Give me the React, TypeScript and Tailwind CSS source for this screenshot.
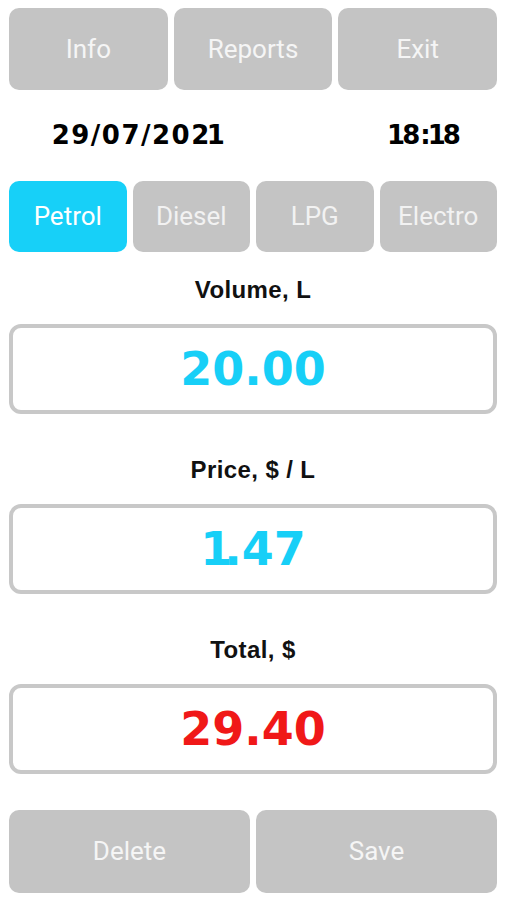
const topButtons = ["Info", "Reports", "Exit"];
const fuels = ["Petrol", "Diesel", "LPG", "Electro"];

// the app's digit font has a narrow "1"; DejaVu's digits are tabular,
// so trim the space on both sides of every "1"
type Trim = { base: string; one: string; two: string };

const Digits = ({ text, trim }: { text: string; trim: Trim }) => (
  <>
    {text.split("").map((ch, i) => {
      const cuts = (ch === "1" ? 1 : 0) + (text[i + 1] === "1" ? 1 : 0);
      const cls = cuts === 2 ? trim.two : cuts === 1 ? trim.one : trim.base;
      return (
        <span key={i} className={cls}>
          {ch}
        </span>
      );
    })}
  </>
);

const bigTrim: Trim = { base: "", one: "tracking-[-8px]", two: "tracking-[-16px]" };
const dateTrim: Trim = {
  base: "tracking-[1.5px]",
  one: "tracking-[-2.5px]",
  two: "tracking-[-6.5px]",
};
const timeTrim: Trim = { base: "", one: "tracking-[-3px]", two: "tracking-[-6px]" };

type FieldProps = {
  label: string;
  value: string;
  color: string;
};

const Field = ({ label, value, color }: FieldProps) => (
  <div className="flex flex-col items-center">
    <div className="h-[24px] text-[24px] leading-[24px] font-bold tracking-[0.4px] text-[#111] [font-family:'Liberation_Sans',Arial,sans-serif]">
      {label}
    </div>
    <div className="mt-[22px] flex h-[90px] w-full items-center justify-center rounded-[12px] border-[4px] border-[#c8c8c8] bg-white">
      <span
        className={`text-[46px] font-bold leading-none [font-family:'DejaVu_Sans',sans-serif] ${color}`}
      >
        <Digits text={value} trim={bigTrim} />
      </span>
    </div>
  </div>
);

export default function App() {
  return (
    <div className="h-[900px] w-[506px] bg-white px-[9px] pt-[8px] [font-family:Roboto,sans-serif]">
      <div className="grid grid-cols-3 gap-[6px]">
        {topButtons.map((label) => (
          <button
            key={label}
            type="button"
            className="h-[82px] rounded-[10px] bg-[#c4c4c4] text-[26px] text-[#f5f5f5]"
          >
            {label}
          </button>
        ))}
      </div>

      <div className="flex h-[91px] items-center">
        <div className="w-[256px] text-center text-[26px] font-bold text-black [font-family:'DejaVu_Sans',sans-serif]">
          <Digits text="29/07/2021" trim={dateTrim} />
        </div>
        <div className="flex-1 pl-[86px] text-center text-[26px] font-bold text-black [font-family:'DejaVu_Sans',sans-serif]">
          <Digits text="18:18" trim={timeTrim} />
        </div>
      </div>

      <div className="grid grid-cols-4 gap-[6px]">
        {fuels.map((fuel, index) => (
          <button
            key={fuel}
            type="button"
            className={
              index === 0
                ? "h-[71px] rounded-[10px] bg-[#17d0f8] text-[26px] text-white"
                : "h-[71px] rounded-[10px] bg-[#c4c4c4] text-[26px] text-[#f2f2f2]"
            }
          >
            {fuel}
          </button>
        ))}
      </div>

      <div className="mt-[26px] flex flex-col gap-[44px]">
        <Field label="Volume, L" value="20.00" color="text-[#17cff7]" />
        <Field label="Price, $ / L" value="1.47" color="text-[#17cff7]" />
        <Field label="Total, $" value="29.40" color="text-[#f01818]" />
      </div>

      <div className="mt-[36px] grid grid-cols-2 gap-[6px]">
        <button
          type="button"
          className="h-[83px] rounded-[10px] bg-[#c4c4c4] text-[26px] text-[#f5f5f5]"
        >
          Delete
        </button>
        <button
          type="button"
          className="h-[83px] rounded-[10px] bg-[#c4c4c4] text-[26px] text-[#f5f5f5]"
        >
          Save
        </button>
      </div>
    </div>
  );
}
